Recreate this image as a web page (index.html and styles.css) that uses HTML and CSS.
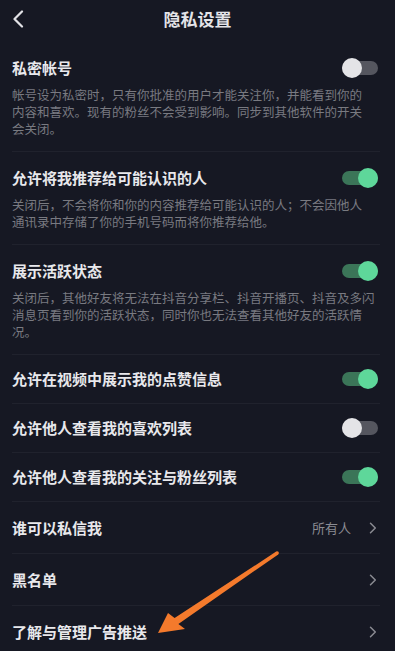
FILE: index.html
```html
<!DOCTYPE html>
<html lang="zh-CN">
<head>
<meta charset="utf-8">
<title>隐私设置</title>
<link rel="stylesheet" href="styles.css">
</head>
<body>
<div class="screen">
  <header class="nav">
    <svg class="back" width="12" height="18" viewBox="0 0 12 18"><path d="M10 1.5 L2.5 9 L10 16.5" fill="none" stroke="#e2e2e6" stroke-width="2.2" stroke-linecap="round" stroke-linejoin="round"/></svg>
    <h1 class="nav-title">隐私设置</h1>
  </header>
  <ul class="list">
    <li class="item item-desc">
      <div class="item-main"><span class="label">私密帐号</span><span class="switch"></span></div>
      <p class="desc">帐号设为私密时，只有你批准的用户才能关注你，并能看到你的<br>内容和喜欢。现有的粉丝不会受到影响。同步到其他软件的开关<br>会关闭。</p>
    </li>
    <li class="item item-desc">
      <div class="item-main"><span class="label">允许将我推荐给可能认识的人</span><span class="switch on"></span></div>
      <p class="desc">关闭后，不会将你和你的内容推荐给可能认识的人；不会因他人<br>通讯录中存储了你的手机号码而将你推荐给他。</p>
    </li>
    <li class="item item-desc">
      <div class="item-main"><span class="label">展示活跃状态</span><span class="switch on"></span></div>
      <p class="desc">关闭后，其他好友将无法在抖音分享栏、抖音开播页、抖音及多闪<br>消息页看到你的活跃状态，同时你也无法查看其他好友的活跃情<br>况。</p>
    </li>
    <li class="item item-simple">
      <span class="label">允许在视频中展示我的点赞信息</span><span class="switch on"></span>
    </li>
    <li class="item item-simple">
      <span class="label">允许他人查看我的喜欢列表</span><span class="switch"></span>
    </li>
    <li class="item item-simple">
      <span class="label">允许他人查看我的关注与粉丝列表</span><span class="switch on"></span>
    </li>
    <li class="item item-link">
      <span class="label">谁可以私信我</span>
      <span class="extra"><span class="value">所有人</span><svg class="chev" width="8" height="12" viewBox="0 0 8 12"><path d="M1.5 1.2 L6.3 6 L1.5 10.8" fill="none" stroke="#8a8b92" stroke-width="1.5" stroke-linecap="round" stroke-linejoin="round"/></svg></span>
    </li>
    <li class="item item-link">
      <span class="label">黑名单</span>
      <span class="extra"><svg class="chev" width="8" height="12" viewBox="0 0 8 12"><path d="M1.5 1.2 L6.3 6 L1.5 10.8" fill="none" stroke="#8a8b92" stroke-width="1.5" stroke-linecap="round" stroke-linejoin="round"/></svg></span>
    </li>
    <li class="item item-link">
      <span class="label">了解与管理广告推送</span>
      <span class="extra"><svg class="chev" width="8" height="12" viewBox="0 0 8 12"><path d="M1.5 1.2 L6.3 6 L1.5 10.8" fill="none" stroke="#8a8b92" stroke-width="1.5" stroke-linecap="round" stroke-linejoin="round"/></svg></span>
    </li>
  </ul>
  <svg class="arrow" width="395" height="651" viewBox="0 0 395 651">
    <polygon points="276.2,551.6 278.2,554.4 178.4,623.9 185,629 158,633 168,613 174.6,618.1" fill="#f47a2c"/>
    <circle cx="277.2" cy="553" r="1.7" fill="#f47a2c"/>
  </svg>
</div>
</body>
</html>
```

FILE: styles.css
```css
* { box-sizing: border-box; }
html, body {
  margin: 0;
  padding: 0;
  background: #161823;
}
body {
  font-family: "Noto Sans CJK SC", "Noto Sans", sans-serif;
  color: #e6e6ea;
  overflow: hidden;
}
.screen {
  position: relative;
  width: 395px;
  height: 651px;
  overflow: hidden;
  background: #161823;
}
.nav {
  height: 42px;
  display: flex;
  align-items: center;
  justify-content: center;
  position: relative;
}
.back {
  position: absolute;
  left: 12px;
  top: 10px;
}
.nav-title {
  margin: 0;
  font-size: 17px;
  font-weight: 700;
  color: #e4e4e8;
  line-height: 20px;
  margin-top: -4px;
}
.list {
  list-style: none;
  margin: 0;
  padding: 0 15px 0 12px;
}
.item {
  border-bottom: 1px solid #20222d;
}
.item:last-child { border-bottom: none; }
.item-desc {
  padding: 16px 0 14px;
}
.item-main {
  display: flex;
  align-items: center;
  justify-content: space-between;
  height: 20px;
}
.label {
  font-size: 15px;
  font-weight: 700;
  line-height: 20px;
  color: #e8e8ec;
}
.desc {
  margin: 8px 0 0;
  font-size: 12.5px;
  line-height: 17px;
  color: #797a81;
  white-space: nowrap;
}
.item-simple {
  height: 49px;
  display: flex;
  align-items: center;
  justify-content: space-between;
}
.item-link {
  height: 52px;
  display: flex;
  align-items: center;
  justify-content: space-between;
}
.extra {
  display: flex;
  align-items: center;
  gap: 18px;
  margin-right: 3px;
}
.value {
  font-size: 13px;
  color: #8a8b92;
  line-height: 18px;
}
.chev { display: block; }
.switch {
  position: relative;
  width: 36px;
  height: 14px;
  border-radius: 7px;
  background: #55565f;
  margin-right: 2px;
  flex: none;
}
.switch::after {
  content: "";
  position: absolute;
  top: -3px;
  left: 0;
  width: 20px;
  height: 20px;
  border-radius: 50%;
  background: #e4e4e7;
}
.switch.on { background: #3b7558; }
.switch.on::after {
  left: 16px;
  background: #5ed79a;
}
.arrow {
  position: absolute;
  left: 0;
  top: 0;
  pointer-events: none;
}
```
